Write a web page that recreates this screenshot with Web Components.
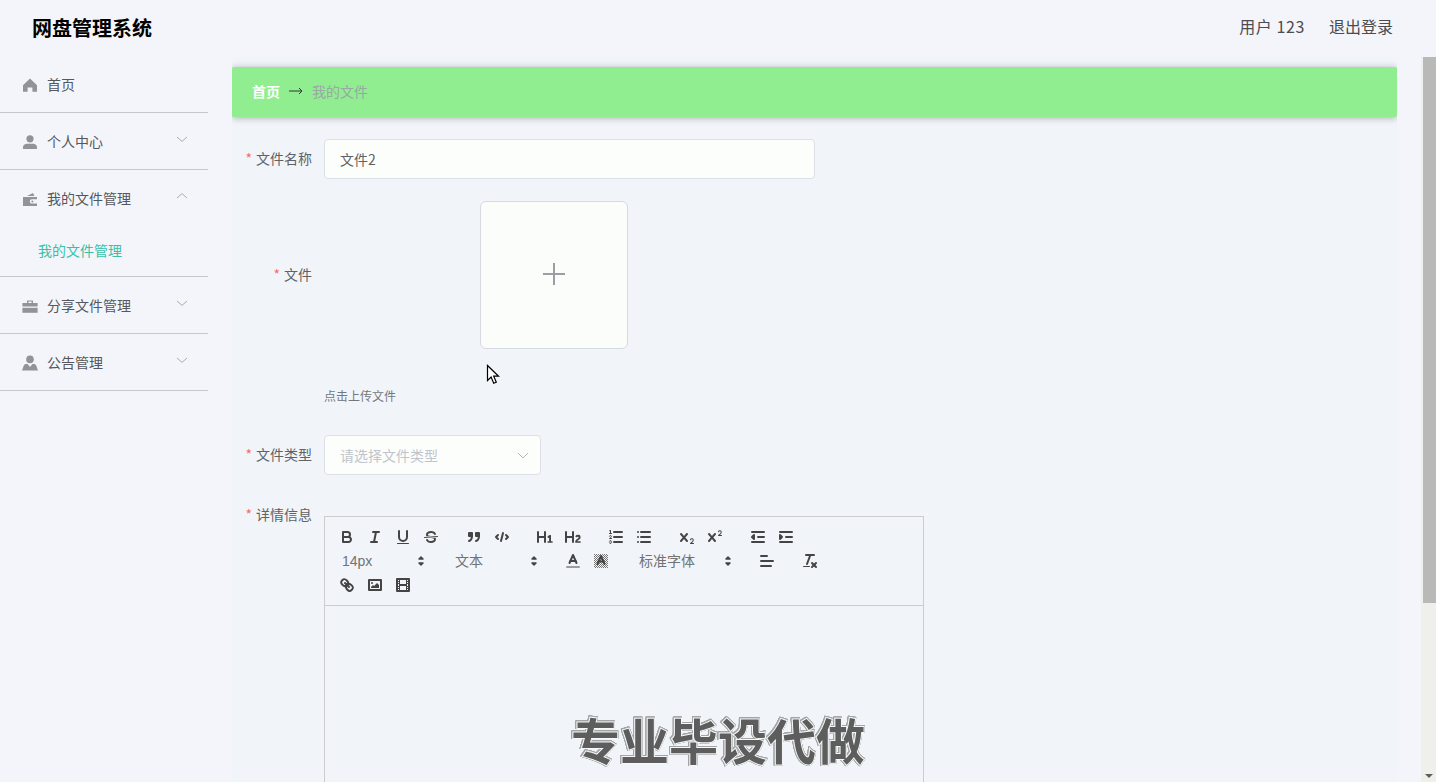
<!DOCTYPE html>
<html lang="zh">
<head>
<meta charset="utf-8">
<title>网盘管理系统</title>
<style>
  html, body { margin: 0; height: 100%; overflow: hidden; }
  body {
    background: #f3f5fa;
    color: #606266;
    font-family: "Noto Sans CJK SC", "Noto Sans", sans-serif;
    font-size: 14px;
  }
</style>
</head>
<body>
<app-shell>
  <app-header slot="top" title="网盘管理系统" user="用户 123"></app-header>
  <side-menu slot="side">
    <menu-group label="首页" icon="home" plain></menu-group>
    <menu-group label="个人中心" icon="user"></menu-group>
    <menu-group label="我的文件管理" icon="wallet" open>
      <menu-sub>我的文件管理</menu-sub>
    </menu-group>
    <menu-group label="分享文件管理" icon="case"></menu-group>
    <menu-group label="公告管理" icon="person"></menu-group>
  </side-menu>
  <scroll-pane slot="main">
    <bread-crumb home="首页" current="我的文件"></bread-crumb>
    <form-row label="文件名称">
      <text-field value="文件2"></text-field>
    </form-row>
    <form-row label="文件" tall>
      <file-upload tip="点击上传文件"></file-upload>
    </form-row>
    <form-row label="文件类型" style="--gap-top:31px">
      <select-field placeholder="请选择文件类型"></select-field>
    </form-row>
    <form-row label="详情信息" style="--gap-top:20px">
      <rich-editor>专业毕设代做</rich-editor>
    </form-row>
  </scroll-pane>
  <mouse-pointer slot="over"></mouse-pointer>
</app-shell>

<script>
class AppShell extends HTMLElement {
  constructor() {
    super();
    this.attachShadow({ mode: 'open' });
    this.shadowRoot.innerHTML = `
      <style>
        :host { display: flex; flex-direction: column; height: 782px; position: relative; overflow: hidden; }
        .body { flex: 1; display: flex; min-height: 0; }
      </style>
      <slot name="top"></slot>
      <div class="body">
        <slot name="side"></slot>
        <slot name="main"></slot>
      </div>
      <slot name="over"></slot>
    `;
  }
}
customElements.define('app-shell', AppShell);

class AppHeader extends HTMLElement {
  constructor() {
    super();
    this.attachShadow({ mode: 'open' });
  }
  connectedCallback() {
    this.shadowRoot.innerHTML = `
      <style>
        :host { display: flex; flex: none; height: 56px; align-items: center; justify-content: space-between; padding: 0 43px 1px 32px; box-sizing: border-box; }
        .brand { font-size: 20px; font-weight: 700; color: #000; }
        .right { display: flex; gap: 24px; font-size: 16px; color: #4a4c50; margin-bottom: 3px; }
        .user { letter-spacing: .6px; }
      </style>
      <div class="brand">${this.getAttribute('title')}</div>
      <div class="right"><span class="user">${this.getAttribute('user')}</span><span>退出登录</span></div>
    `;
  }
}
customElements.define('app-header', AppHeader);

class SideMenu extends HTMLElement {
  constructor() {
    super();
    this.attachShadow({ mode: 'open' });
    this.shadowRoot.innerHTML = `
      <style>
        :host { display: block; flex: none; width: 208px; }
      </style>
      <slot></slot>
    `;
  }
}
customElements.define('side-menu', SideMenu);

const MENU_ICONS = {
  home: '<path d="M8 1.6 1 8.2v6.6h4.6v-4.2h4.8v4.2H15V8.2z"/>',
  user: '<circle cx="8" cy="4.8" r="3.6"/><path d="M1 15v-1.8C1 11 2.8 9.8 5 9.8h6c2.2 0 4 1.2 4 3.4V15z"/>',
  wallet: '<path d="M5 5 11 2l1.4 3z"/><path d="M1 6h14v2.2H10a2.2 2.2 0 0 0 0 4.4h5V15H1z"/><circle cx="10.4" cy="10.4" r="1"/>',
  case: '<path d="M5 2.4h6V5h4.6v3.6H.4V5H5zm1.4 1.2V5h3.2V3.6z"/><path d="M.4 9.8h15.2v5H.4z"/>',
  person: '<circle cx="8" cy="4.4" r="3.8"/><path d="M0 15.4 1.8 10.6c.4-1 1.2-1.6 2.4-1.6h1.4L8 12l2.4-3h1.4c1.2 0 2 .6 2.4 1.6l1.8 4.8z"/>'
};

class MenuGroup extends HTMLElement {
  constructor() {
    super();
    this.attachShadow({ mode: 'open' });
  }
  connectedCallback() {
    const isOpen = this.hasAttribute('open');
    const chevron = this.hasAttribute('plain') ? '' : `
      <svg class="chev" width="12" height="12" viewBox="0 0 12 12" fill="none" stroke="#a9acb3" stroke-width="1">
        <path d="${isOpen ? 'M1 8 6 3.6 11 8' : 'M1 4 6 8.4 11 4'}"/>
      </svg>`;
    this.shadowRoot.innerHTML = `
      <style>
        :host { display: block; border-bottom: 1px solid #c6c8cb; }
        .title { display: flex; align-items: center; height: 56px; padding-left: 22px; position: relative; color: #55575c; font-size: 14px; line-height: 1; }
        .title svg.icon { flex: none; margin-right: 9px; fill: #909399; position: relative; top: 1px; }
        .chev { position: absolute; left: 176px; top: 20px; }
      </style>
      <div class="title">
        <svg class="icon" width="16" height="16" viewBox="0 0 16 16">${MENU_ICONS[this.getAttribute('icon')]}</svg>
        <span>${this.getAttribute('label')}</span>
        ${chevron}
      </div>
      <slot></slot>
    `;
  }
}
customElements.define('menu-group', MenuGroup);

class MenuSub extends HTMLElement {
  constructor() {
    super();
    this.attachShadow({ mode: 'open' });
    this.shadowRoot.innerHTML = `
      <style>
        :host { display: flex; align-items: center; height: 50px; box-sizing: border-box; padding: 0 0 2px 38px; color: #38c1a8; font-size: 14px; }
      </style>
      <slot></slot>
    `;
  }
}
customElements.define('menu-sub', MenuSub);

class ScrollPane extends HTMLElement {
  constructor() {
    super();
    this.attachShadow({ mode: 'open' });
    this.shadowRoot.innerHTML = `
      <style>
        :host { display: flex; flex: 1; min-width: 0; height: 725px; margin-top: 1px; }
        .gutter { flex: none; width: 24px; }
        .content { flex: none; width: 1165px; height: 725px; background: #f1f5f9; overflow: hidden; }
        .inner { padding-top: 10px; }
        .rest { flex: 1; }
        .rail { flex: none; width: 15px; background: #eff0ec; display: flex; flex-direction: column; align-items: flex-end; position: relative; }
        .thumb { width: 13px; height: 546px; background: #b9bab7; }
        .down { position: absolute; bottom: 4px; right: 3px; width: 0; height: 0; border-left: 4px solid transparent; border-right: 4px solid transparent; border-top: 4px solid #5c5e5c; }
      </style>
      <div class="gutter"></div>
      <div class="content"><div class="inner"><slot></slot></div></div>
      <div class="rest"></div>
      <div class="rail"><div class="thumb"></div><div class="down"></div></div>
    `;
  }
}
customElements.define('scroll-pane', ScrollPane);

class BreadCrumb extends HTMLElement {
  constructor() {
    super();
    this.attachShadow({ mode: 'open' });
  }
  connectedCallback() {
    this.shadowRoot.innerHTML = `
      <style>
        :host { display: flex; align-items: center; height: 50px; box-sizing: border-box; padding: 0 0 3px 20px; margin: 0; background: #90ee90; border-radius: 2px; box-shadow: 0 1px 7px rgba(0,0,0,.3); font-size: 14px; }
        .home { color: #fff; font-weight: 700; }
        .arrow { margin: 0 9px; }
        .cur { color: #98a8a5; }
      </style>
      <span class="home">${this.getAttribute('home')}</span>
      <svg class="arrow" width="14" height="10" viewBox="0 0 14 10" fill="none" stroke="#30373a" stroke-width="1"><path d="M0 5h13M10 2l3 3-3 3"/></svg>
      <span class="cur">${this.getAttribute('current')}</span>
    `;
  }
}
customElements.define('bread-crumb', BreadCrumb);

class FormRow extends HTMLElement {
  constructor() {
    super();
    this.attachShadow({ mode: 'open' });
  }
  connectedCallback() {
    const tall = this.hasAttribute('tall');
    this.shadowRoot.innerHTML = `
      <style>
        :host { display: flex; margin-top: var(--gap-top, 22px); }
        label { flex: none; width: 80px; height: ${tall ? '148px' : '40px'}; box-sizing: border-box; padding-bottom: 2px; display: flex; align-items: center; justify-content: flex-end; color: #606266; font-size: 14px; }
        i { font-style: normal; color: #f56c6c; margin-right: 4px; }
        .ctl { margin-left: 12px; flex: 1; min-width: 0; }
      </style>
      <label><i>*</i>${this.getAttribute('label')}</label>
      <div class="ctl"><slot></slot></div>
    `;
  }
}
customElements.define('form-row', FormRow);

class TextField extends HTMLElement {
  constructor() {
    super();
    this.attachShadow({ mode: 'open' });
  }
  connectedCallback() {
    this.shadowRoot.innerHTML = `
      <style>
        :host { display: flex; align-items: center; width: 491px; height: 40px; box-sizing: border-box; padding: 0 15px; background: #fcfefc; border: 1px solid #dcdfe6; border-radius: 4px; color: #606266; font-size: 14px; }
      </style>
      <span>${this.getAttribute('value')}</span>
    `;
  }
}
customElements.define('text-field', TextField);

class FileUpload extends HTMLElement {
  constructor() {
    super();
    this.attachShadow({ mode: 'open' });
  }
  connectedCallback() {
    this.shadowRoot.innerHTML = `
      <style>
        :host { display: block; }
        .card { width: 148px; height: 148px; margin-left: 156px; box-sizing: border-box; background: #fbfdfa; border: 1px solid #d5d9e2; border-radius: 6px; display: flex; align-items: center; justify-content: center; }
        .tip { margin-top: 38px; font-size: 12px; line-height: 17px; color: #74777d; }
      </style>
      <div class="card">
        <svg width="24" height="24" viewBox="0 0 24 24" stroke="#9a9fa6" stroke-width="2" fill="none"><path d="M12 0v22M1 11h22"/></svg>
      </div>
      <div class="tip">${this.getAttribute('tip')}</div>
    `;
  }
}
customElements.define('file-upload', FileUpload);

class SelectField extends HTMLElement {
  constructor() {
    super();
    this.attachShadow({ mode: 'open' });
  }
  connectedCallback() {
    this.shadowRoot.innerHTML = `
      <style>
        :host { display: flex; align-items: center; justify-content: space-between; width: 217px; height: 40px; box-sizing: border-box; padding: 0 11px 0 15px; background: #fcfefc; border: 1px solid #dcdfe6; border-radius: 4px; color: #c0c4cc; font-size: 14px; }
      </style>
      <span>${this.getAttribute('placeholder')}</span>
      <svg width="12" height="12" viewBox="0 0 12 12" fill="none" stroke="#b4b8c0" stroke-width="1"><path d="M1 4 6 9 11 4"/></svg>
    `;
  }
}
customElements.define('select-field', SelectField);

// quill snow toolbar glyphs, 18x18
const TOOL_ICONS = {
  bold: '<path class="s" d="M5,4H9.5A2.5,2.5,0,0,1,12,6.5v0A2.5,2.5,0,0,1,9.5,9H5V4Z"/><path class="s" d="M5,9h5.5A2.5,2.5,0,0,1,13,11.5v0A2.5,2.5,0,0,1,10.5,14H5V9Z"/>',
  italic: '<line class="s" x1="7" x2="13" y1="4" y2="4"/><line class="s" x1="5" x2="11" y1="14" y2="14"/><line class="s" x1="8" x2="10" y1="14" y2="4"/>',
  underline: '<path class="s" d="M5,3V9a4.012,4.012,0,0,0,4,4H9a4.012,4.012,0,0,0,4-4V3"/><rect class="f" height="1" rx=".5" ry=".5" width="12" x="3" y="15"/>',
  strike: '<line class="s t" x1="15.5" x2="2.5" y1="8.5" y2="9.5"/><path class="f" d="M9.007,8C6.542,7.791,6,7.519,6,6.5,6,5.792,7.283,5,9,5c1.571,0,2.765.679,2.969,1.309a1,1,0,0,0,1.9-.617C13.356,4.106,11.354,3,9,3,6.2,3,4,4.538,4,6.5a3.2,3.2,0,0,0,.5,1.843Z"/><path class="f" d="M8.984,10C11.457,10.208,12,10.479,12,11.5c0,.708-1.283,1.5-3,1.5-1.571,0-2.765-.679-2.969-1.309a1,1,0,1,0-1.9.617C4.644,13.894,6.646,15,9,15c2.8,0,5-1.538,5-3.5a3.2,3.2,0,0,0-.5-1.843Z"/>',
  quote: '<rect class="f s" height="3" width="3" x="4" y="5"/><rect class="f s" height="3" width="3" x="11" y="5"/><path class="s" fill="none" d="M7,8c0,4.031-3,5-3,5"/><path class="s" fill="none" d="M14,8c0,4.031-3,5-3,5"/>',
  code: '<polyline class="s" points="5 7 3 9 5 11"/><polyline class="s" points="13 7 15 9 13 11"/><line class="s" x1="10" x2="8" y1="5" y2="13"/>',
  h1: '<path class="f" d="M10,4V14a1,1,0,0,1-2,0V10H3v4a1,1,0,0,1-2,0V4A1,1,0,0,1,3,4V8H8V4a1,1,0,0,1,2,0Zm6.06787,9.209H14.98975V7.59863a.54085.54085,0,0,0-.605-.60547h-.62744a1.01119,1.01119,0,0,0-.748.29688L11.645,8.56641a.5435.5435,0,0,0-.022.8584l.28613.30762a.53861.53861,0,0,0,.84717.0332l.09912-.08789a1.2137,1.2137,0,0,0,.2417-.35254h.02246s-.01123.30859-.01123.60547V13.209H12.041a.54085.54085,0,0,0-.605.60547v.43945a.54085.54085,0,0,0,.605.60547h4.02686a.54085.54085,0,0,0,.605-.60547v-.43945A.54085.54085,0,0,0,16.06787,13.209Z"/>',
  h2: '<path class="f" d="M16.73975,13.81445v.43945a.54085.54085,0,0,1-.605.60547H11.855a.58392.58392,0,0,1-.64893-.60547V14.0127c0-2.90527,3.39941-3.42187,3.39941-4.55469a.77675.77675,0,0,0-.84717-.78125,1.17684,1.17684,0,0,0-.83594.38477c-.2749.26367-.561.374-.85791.13184l-.4292-.34082c-.30811-.24219-.38525-.51758-.1543-.81445a2.97155,2.97155,0,0,1,2.45361-1.17676,2.45393,2.45393,0,0,1,2.68408,2.40918c0,2.45312-3.1792,2.92676-3.27832,3.93848h2.79443A.54085.54085,0,0,1,16.73975,13.81445ZM9,3A.99974.99974,0,0,0,8,4V8H3V4A1,1,0,0,0,1,4V14a1,1,0,0,0,2,0V10H8v4a1,1,0,0,0,2,0V4A.99974.99974,0,0,0,9,3Z"/>',
  ol: '<line class="s" x1="7" x2="15" y1="4" y2="4"/><line class="s" x1="7" x2="15" y1="9" y2="9"/><line class="s" x1="7" x2="15" y1="14" y2="14"/><line class="s t" x1="2.5" x2="4.5" y1="5.5" y2="5.5"/><path class="f" d="M3.5,6A0.5,0.5,0,0,1,3,5.5V3.085l-0.276.138A0.5,0.5,0,0,1,2.053,3c-0.124-.247-0.023-0.324.224-0.447l1-.5A0.5,0.5,0,0,1,4,2.5v3A0.5,0.5,0,0,1,3.5,6Z"/><path class="s t" fill="none" d="M4.5,10.5h-2c0-.234,1.85-1.076,1.85-2.234A0.959,0.959,0,0,0,2.5,8.156"/><path class="s t" fill="none" d="M2.5,14.846a0.959,0.959,0,0,0,1.85-.109A0.7,0.7,0,0,0,3.75,14a0.688,0.688,0,0,0,.6-0.736,0.959,0.959,0,0,0-1.85-.109"/>',
  ul: '<line class="s" x1="6" x2="15" y1="4" y2="4"/><line class="s" x1="6" x2="15" y1="9" y2="9"/><line class="s" x1="6" x2="15" y1="14" y2="14"/><line class="s" x1="3" x2="3" y1="4" y2="4"/><line class="s" x1="3" x2="3" y1="9" y2="9"/><line class="s" x1="3" x2="3" y1="14" y2="14"/>',
  sub: '<path class="f" d="M15.5,15H13.861a3.858,3.858,0,0,0,1.914-2.975,1.8,1.8,0,0,0-1.6-1.751A1.921,1.921,0,0,0,12.021,11.7a0.50013,0.50013,0,1,0,.957.291h0a0.914,0.914,0,0,1,1.053-.725,0.81,0.81,0,0,1,.744.762c0,1.076-1.16971,1.86982-1.93971,2.43082A1.45639,1.45639,0,0,0,12,15.5a0.5,0.5,0,0,0,.5.5h3A0.5,0.5,0,0,0,15.5,15Z"/><path class="f" d="M9.65,5.241a1,1,0,0,0-1.409.108L6,7.964,3.759,5.349A1,1,0,0,0,2.192,6.59178Q2.21541,6.6213,2.241,6.649L4.684,9.5,2.241,12.35A1,1,0,0,0,3.71,13.70722q0.02557-.02768.049-0.05722L6,11.036,8.241,13.65a1,1,0,1,0,1.567-1.24277Q9.78459,12.3777,9.759,12.35L7.316,9.5,9.759,6.651A1,1,0,0,0,9.65,5.241Z"/>',
  sup: '<path class="f" d="M15.5,7H13.861a4.015,4.015,0,0,0,1.914-2.975,1.8,1.8,0,0,0-1.6-1.751A1.922,1.922,0,0,0,12.021,3.7a0.5,0.5,0,1,0,.957.291,0.917,0.917,0,0,1,1.053-.725,0.81,0.81,0,0,1,.744.762c0,1.077-1.164,1.925-1.934,2.486A1.423,1.423,0,0,0,12,7.5a0.5,0.5,0,0,0,.5.5h3A0.5,0.5,0,0,0,15.5,7Z"/><path class="f" d="M9.651,5.241a1,1,0,0,0-1.41.108L6,7.964,3.759,5.349a1,1,0,1,0-1.519,1.3L4.683,9.5,2.241,12.35a1,1,0,1,0,1.519,1.3L6,11.036l2.241,2.615a1,1,0,0,0,1.519-1.3L7.317,9.5,9.759,6.651A1,1,0,0,0,9.651,5.241Z"/>',
  outdent: '<line class="s" x1="3" x2="15" y1="14" y2="14"/><line class="s" x1="3" x2="15" y1="4" y2="4"/><line class="s" x1="9" x2="15" y1="9" y2="9"/><polyline class="s f" points="5 7 5 11 3 9 5 7"/>',
  indent: '<line class="s" x1="3" x2="15" y1="14" y2="14"/><line class="s" x1="3" x2="15" y1="4" y2="4"/><line class="s" x1="9" x2="15" y1="9" y2="9"/><polyline class="s f" points="3 7 3 11 5 9 3 7"/>',
  color: '<line class="s" stroke-opacity=".5" x1="3" x2="15" y1="15" y2="15"/><polyline class="s" points="5.5 11 9 3 12.5 11"/><line class="s" x1="11.63" x2="6.38" y1="9" y2="9"/>',
  background: '<defs><pattern id="dots" width="2" height="2" patternUnits="userSpaceOnUse"><rect width="1" height="1" fill="#777"/><rect x="1" y="1" width="1" height="1" fill="#777"/></pattern></defs><rect x="2" y="2" width="14" height="14" fill="url(#dots)"/><polyline class="s" points="5.5 12 9 4 12.5 12"/><line class="s" x1="11.63" x2="6.38" y1="9.5" y2="9.5"/>',
  left: '<line class="s" x1="3" x2="15" y1="9" y2="9"/><line class="s" x1="3" x2="13" y1="14" y2="14"/><line class="s" x1="3" x2="9" y1="4" y2="4"/>',
  clean: '<line class="s" x1="5" x2="13" y1="3" y2="3"/><line class="s" x1="6" x2="9.35" y1="12" y2="3"/><line class="s" x1="11" x2="15" y1="11" y2="15"/><line class="s" x1="15" x2="11" y1="11" y2="15"/><rect class="f" height="1" rx=".5" ry=".5" width="7" x="2" y="14"/>',
  link: '<line class="s" x1="7" x2="11" y1="7" y2="11"/><path class="s" d="M8.9,4.577a3.476,3.476,0,0,1,.36,4.679A3.476,3.476,0,0,1,4.577,8.9C3.185,7.5,2.035,6.4,4.217,4.217S7.5,3.185,8.9,4.577Z"/><path class="s" d="M13.423,9.1a3.476,3.476,0,0,0-4.679-.36,3.476,3.476,0,0,0,.36,4.679c1.392,1.392,2.5,2.542,4.679.36S14.815,10.5,13.423,9.1Z"/>',
  image: '<rect class="s" height="10" width="12" x="3" y="4"/><circle class="f" cx="6" cy="7" r="1"/><polyline class="f" points="5 12 5 11 7 9 8 10 11 7 13 9 13 12 5 12"/>',
  video: '<rect class="s" height="12" width="12" x="3" y="3"/><rect class="f" height="12" width="1" x="5" y="3"/><rect class="f" height="12" width="1" x="12" y="3"/><rect class="f" height="2" width="8" x="5" y="8"/><rect class="f" height="1" width="3" x="3" y="5"/><rect class="f" height="1" width="3" x="3" y="7"/><rect class="f" height="1" width="3" x="3" y="10"/><rect class="f" height="1" width="3" x="3" y="12"/><rect class="f" height="1" width="3" x="12" y="5"/><rect class="f" height="1" width="3" x="12" y="7"/><rect class="f" height="1" width="3" x="12" y="10"/><rect class="f" height="1" width="3" x="12" y="12"/>'
};

class RichEditor extends HTMLElement {
  constructor() {
    super();
    this.attachShadow({ mode: 'open' });
  }
  tool(name) {
    return `<span class="btn"><svg width="18" height="18" viewBox="0 0 18 18">${TOOL_ICONS[name]}</svg></span>`;
  }
  picker(text, width) {
    return `<span class="picker" style="width:${width}px"><span>${text}</span>
      <svg width="18" height="18" viewBox="0 0 18 18"><polygon class="s f p" points="7 11 9 13 11 11 7 11"/><polygon class="s f p" points="7 7 9 5 11 7 7 7"/></svg></span>`;
  }
  group(items) {
    return `<span class="grp">${items}</span>`;
  }
  connectedCallback() {
    const t = (...names) => this.group(names.map(n => this.tool(n)).join(''));
    this.shadowRoot.innerHTML = `
      <style>
        :host { display: block; width: 600px; margin-top: 21px; position: relative; }
        .bar { border: 1px solid #ccc; padding: 8px; box-sizing: border-box; line-height: 0; font-family: "Liberation Sans", "Noto Sans CJK SC", sans-serif; }
        .line { display: flex; height: 24px; }
        .grp { display: flex; margin-right: 15px; }
        .btn { width: 28px; height: 24px; display: flex; align-items: center; justify-content: center; }
        .picker { height: 24px; display: flex; align-items: center; justify-content: space-between; padding-left: 9px; padding-right: 1px; box-sizing: border-box; font-size: 14px; line-height: 24px; color: #707276; }
        .s { fill: none; stroke: #444; stroke-width: 2; stroke-linecap: round; stroke-linejoin: round; }
        .t { stroke-width: 1; }
        .p { stroke-width: 1.5; }
        .f { fill: #444; }
        .s.f { fill: #444; }
        .edit { border: 1px solid #ccc; border-top: 0; height: 400px; position: relative; }
        .mark { position: absolute; left: 246px; top: 103px; font-size: 49px; line-height: 60px; font-weight: 700; color: #5c5d5c; white-space: nowrap; paint-order: stroke fill; -webkit-text-stroke: 2px #f6f8fa; filter: drop-shadow(.5px 0 0 #a3a5a5) drop-shadow(-.5px 0 0 #a3a5a5) drop-shadow(0 .5px 0 #a3a5a5) drop-shadow(0 -.5px 0 #a3a5a5); }
      </style>
      <div class="bar">
        <div class="line">${t('bold', 'italic', 'underline', 'strike')}${t('quote', 'code')}${t('h1', 'h2')}${t('ol', 'ul')}${t('sub', 'sup')}${t('outdent', 'indent')}</div>
        <div class="line">${this.group(this.picker('14px', 98))}${this.group(this.picker('文本', 98))}${t('color', 'background')}${this.group(this.picker('标准字体', 108))}${t('left')}${t('clean')}</div>
        <div class="line">${t('link', 'image', 'video')}</div>
      </div>
      <div class="edit"><div class="mark"><slot></slot></div></div>
    `;
  }
}
customElements.define('rich-editor', RichEditor);

class MousePointer extends HTMLElement {
  constructor() {
    super();
    this.attachShadow({ mode: 'open' });
    this.shadowRoot.innerHTML = `
      <style>
        :host { position: absolute; left: 486px; top: 364px; display: block; width: 14px; height: 22px; }
      </style>
      <svg width="14" height="22" viewBox="0 0 14 22"><path d="M1.5 1.5v15l3.6-3.4 2.6 6.2 2.6-1.1-2.6-6h4.9z" fill="#fff" stroke="#000" stroke-width="1.2"/></svg>
    `;
  }
}
customElements.define('mouse-pointer', MousePointer);
</script>
</body>
</html>
